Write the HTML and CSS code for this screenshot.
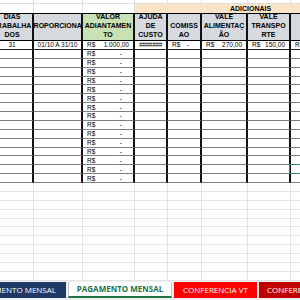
FILE: index.html
```html
<!DOCTYPE html>
<html lang="pt">
<head>
<meta charset="utf-8">
<title>Pagamento mensal</title>
<link rel="stylesheet" href="styles.css">
</head>
<body>
<div class="sheet">
  <div class="row r0">
    <div class="c g"></div><div class="c g"></div><div class="c g"></div><div class="c g"></div>
    <div class="c g"></div><div class="c g"></div><div class="c g"></div><div class="c g"></div>
  </div>
  <div class="row r1">
    <div class="c g"></div><div class="c g"></div><div class="c g"></div>
    <div class="c adic">ADICIONAIS</div>
  </div>
  <div class="row hdr">
    <div class="c h"><span>DIAS</span><span>TRABALHA</span><span>DOS</span></div>
    <div class="c h mid"><span>PROPORCIONAL</span></div>
    <div class="c h green"><span>VALOR</span><span>ADIANTAMEN</span><span>TO</span></div>
    <div class="c h"><span>AJUDA</span><span>DE</span><span>CUSTO</span></div>
    <div class="c h"><span>COMISS</span><span>AO</span></div>
    <div class="c h"><span>VALE</span><span>ALIMENTAÇ</span><span>ÃO</span></div>
    <div class="c h"><span>VALE</span><span>TRANSPO</span><span>RTE</span></div>
    <div class="c h"></div>
  </div>
  <div class="row d first">
    <div class="c ctr">31</div>
    <div class="c ctr">01/10 A 31/10</div>
    <div class="c acc"><span>R$</span><span>1.000,00</span></div>
    <div class="c ctr hash">#######</div>
    <div class="c acc"><span>R$</span><span class="dash">-</span></div>
    <div class="c acc"><span>R$</span><span>270,00</span></div>
    <div class="c acc"><span>R$</span><span>150,00</span></div>
    <div class="c acc"><span>R$</span><span></span></div>
  </div>
  <div class="row d"><div class="c"></div><div class="c"></div><div class="c acc"><span>R$</span><span class="dash">-</span></div><div class="c"></div><div class="c"></div><div class="c"></div><div class="c"></div><div class="c"></div></div>
  <div class="row d"><div class="c"></div><div class="c"></div><div class="c acc"><span>R$</span><span class="dash">-</span></div><div class="c"></div><div class="c"></div><div class="c"></div><div class="c"></div><div class="c"></div></div>
  <div class="row d"><div class="c"></div><div class="c"></div><div class="c acc"><span>R$</span><span class="dash">-</span></div><div class="c"></div><div class="c"></div><div class="c"></div><div class="c"></div><div class="c"></div></div>
  <div class="row d"><div class="c"></div><div class="c"></div><div class="c acc"><span>R$</span><span class="dash">-</span></div><div class="c"></div><div class="c"></div><div class="c"></div><div class="c"></div><div class="c"></div></div>
  <div class="row d"><div class="c"></div><div class="c"></div><div class="c acc"><span>R$</span><span class="dash">-</span></div><div class="c"></div><div class="c"></div><div class="c"></div><div class="c"></div><div class="c"></div></div>
  <div class="row d"><div class="c"></div><div class="c"></div><div class="c acc"><span>R$</span><span class="dash">-</span></div><div class="c"></div><div class="c"></div><div class="c"></div><div class="c"></div><div class="c"></div></div>
  <div class="row d"><div class="c"></div><div class="c"></div><div class="c acc"><span>R$</span><span class="dash">-</span></div><div class="c"></div><div class="c"></div><div class="c"></div><div class="c"></div><div class="c"></div></div>
  <div class="row d"><div class="c"></div><div class="c"></div><div class="c acc"><span>R$</span><span class="dash">-</span></div><div class="c"></div><div class="c"></div><div class="c"></div><div class="c"></div><div class="c"></div></div>
  <div class="row d"><div class="c"></div><div class="c"></div><div class="c acc"><span>R$</span><span class="dash">-</span></div><div class="c"></div><div class="c"></div><div class="c"></div><div class="c"></div><div class="c"></div></div>
  <div class="row d"><div class="c"></div><div class="c"></div><div class="c acc"><span>R$</span><span class="dash">-</span></div><div class="c"></div><div class="c"></div><div class="c"></div><div class="c"></div><div class="c"></div></div>
  <div class="row d"><div class="c"></div><div class="c"></div><div class="c acc"><span>R$</span><span class="dash">-</span></div><div class="c"></div><div class="c"></div><div class="c"></div><div class="c"></div><div class="c"></div></div>
  <div class="row d"><div class="c"></div><div class="c"></div><div class="c acc"><span>R$</span><span class="dash">-</span></div><div class="c"></div><div class="c"></div><div class="c"></div><div class="c"></div><div class="c"></div></div>
  <div class="row d"><div class="c"></div><div class="c"></div><div class="c acc"><span>R$</span><span class="dash">-</span></div><div class="c"></div><div class="c"></div><div class="c"></div><div class="c"></div><div class="c"></div></div>
  <div class="row d"><div class="c"></div><div class="c"></div><div class="c acc"><span>R$</span><span class="dash">-</span></div><div class="c"></div><div class="c"></div><div class="c"></div><div class="c"></div><div class="c sel"></div></div>
  <div class="row d"><div class="c"></div><div class="c"></div><div class="c acc"><span>R$</span><span class="dash">-</span></div><div class="c"></div><div class="c"></div><div class="c"></div><div class="c"></div><div class="c"></div></div>
  <div class="row e"><div class="c"></div><div class="c"></div><div class="c"></div><div class="c"></div><div class="c"></div><div class="c"></div><div class="c"></div><div class="c"></div></div>
  <div class="row e"><div class="c"></div><div class="c"></div><div class="c"></div><div class="c"></div><div class="c"></div><div class="c"></div><div class="c"></div><div class="c"></div></div>
  <div class="row e"><div class="c"></div><div class="c"></div><div class="c"></div><div class="c"></div><div class="c"></div><div class="c"></div><div class="c"></div><div class="c"></div></div>
  <div class="row e"><div class="c"></div><div class="c"></div><div class="c"></div><div class="c"></div><div class="c"></div><div class="c"></div><div class="c"></div><div class="c"></div></div>
  <div class="row e"><div class="c"></div><div class="c"></div><div class="c"></div><div class="c"></div><div class="c"></div><div class="c"></div><div class="c"></div><div class="c"></div></div>
  <div class="row e"><div class="c"></div><div class="c"></div><div class="c"></div><div class="c"></div><div class="c"></div><div class="c"></div><div class="c"></div><div class="c"></div></div>
  <div class="row e"><div class="c"></div><div class="c"></div><div class="c"></div><div class="c"></div><div class="c"></div><div class="c"></div><div class="c"></div><div class="c"></div></div>
  <div class="row e"><div class="c"></div><div class="c"></div><div class="c"></div><div class="c"></div><div class="c"></div><div class="c"></div><div class="c"></div><div class="c"></div></div>
  <div class="row e"><div class="c"></div><div class="c"></div><div class="c"></div><div class="c"></div><div class="c"></div><div class="c"></div><div class="c"></div><div class="c"></div></div>
  <div class="row e"><div class="c"></div><div class="c"></div><div class="c"></div><div class="c"></div><div class="c"></div><div class="c"></div><div class="c"></div><div class="c"></div></div>
  <div class="row e"><div class="c"></div><div class="c"></div><div class="c"></div><div class="c"></div><div class="c"></div><div class="c"></div><div class="c"></div><div class="c"></div></div>
</div>
<div class="tabs">
  <div class="tab t1">ADIANTAMENTO MENSAL</div>
  <div class="tab t2">PAGAMENTO MENSAL</div>
  <div class="tab t3">CONFERENCIA VT</div>
  <div class="tab t4">CONFERENCIA VA</div>
</div>
</body>
</html>
```
FILE: styles.css
```css
* { box-sizing: border-box; }
html, body { margin: 0; padding: 0; }
body {
  width: 300px;
  height: 300px;
  overflow: hidden;
  background: #fff;
  font-family: "Liberation Sans", Arial, sans-serif;
  color: #000;
}
.sheet {
  margin-left: -8px;
  width: 329px;
}
.row {
  display: grid;
  grid-template-columns: 42px 49px 52px 33px 34px 46px 43px 30px;
}
.c {
  min-width: 0;
  overflow: hidden;
}
.r0 { height: 4px; }
.r1 { height: 9px; }
.g {
  border-right: 1px solid #dedede;
  border-bottom: 1px solid #dedede;
}
.r1 .g { border-bottom: none; }
.adic {
  grid-column: 4 / 9;
  background: #fbe4c6;
  font-weight: bold;
  font-size: 7px;
  line-height: 9px;
  padding-left: 95px;
  white-space: nowrap;
  text-transform: uppercase;
}
.hdr { height: 28px; }
.h {
  display: flex;
  flex-direction: column;
  justify-content: flex-end;
  align-items: center;
  background: #d6d9de;
  border-top: 1px solid #000;
  border-bottom: 1px solid #000;
  border-right: 2px solid #111;
  font-weight: bold;
  font-size: 7px;
  line-height: 8.9px;
  padding-bottom: 0.5px;
  text-transform: uppercase;
}
.h span { white-space: nowrap; }
.h.mid { justify-content: center; }
.h.green { background: #c8e2b6; }
.d { height: 8.875px; }
.d .c {
  border-right: 2px solid #111;
  border-bottom: 1px solid #7e7e7e;
  font-size: 6.5px;
  display: flex;
  align-items: center;
}
.d.first .c { border-bottom-color: #222; }
.ctr { justify-content: center; white-space: nowrap; text-transform: uppercase; }
.acc {
  justify-content: space-between;
  padding: 0 4px 0 4px;
  white-space: nowrap;
}
.dash { padding-right: 7px; }
.hash { letter-spacing: -0.3px; }
.sel { position: relative; overflow: visible !important; }
.sel::after {
  content: "";
  position: absolute;
  left: -2px;
  top: -1px;
  right: -2px;
  bottom: -1px;
  border: 1px solid #2e8b57;
}
.e { height: 8.875px; }
.e .c {
  border-right: 1px solid #e3e3e3;
  border-bottom: 1px solid #e3e3e3;
}
.tabs {
  display: flex;
  height: 20px;
  padding-top: 1px;
  gap: 2px;
  background: #f1f1f1;
}
.tab {
  height: 16px;
  flex: none;
  display: flex;
  align-items: center;
  justify-content: center;
  font-family: "Open Sans", sans-serif;
  font-size: 8px;
  white-space: nowrap;
  overflow: hidden;
  color: #fff;
  text-transform: uppercase;
}
.t1 {
  width: 66px;
  background: #203864;
  justify-content: flex-end;
  padding-right: 10px;
}
.t2 {
  width: 104px;
  background: #fff;
  color: #217346;
  font-weight: bold;
  border-left: 1px solid #c8c8c8;
  border-right: 1px solid #c8c8c8;
  border-bottom: 2px solid #217346;
}
.t3 {
  width: 83px;
  background: #ff0000;
}
.t4 {
  width: 60px;
  background: #c00000;
  justify-content: flex-start;
  padding-left: 8px;
}
```
